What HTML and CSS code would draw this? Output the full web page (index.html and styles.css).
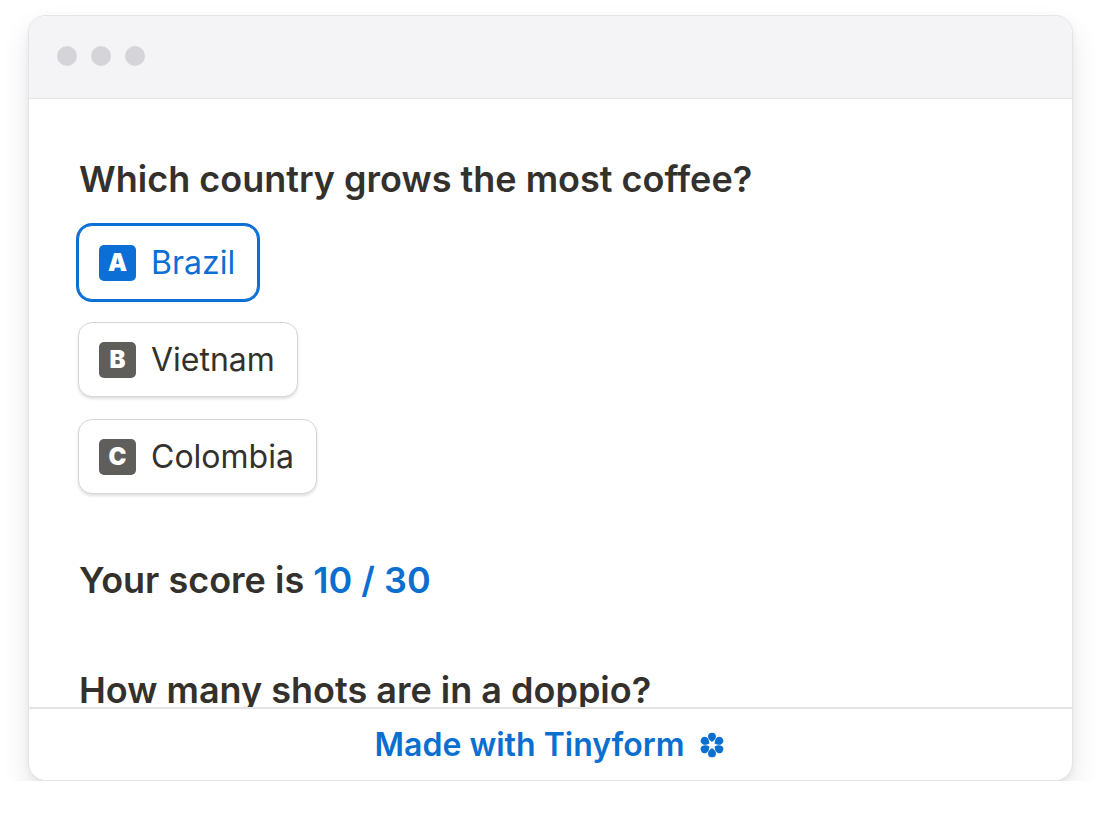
FILE: index.html
```html
<!DOCTYPE html>
<html>
<head>
<meta charset="utf-8">
<link rel="stylesheet" href="styles.css">
</head>
<body>
<div class="window">
  <div class="titlebar">
    <span class="dot"></span><span class="dot"></span><span class="dot"></span>
  </div>
  <div class="content">
    <h2 class="question">Which country grows the most coffee?</h2>
    <div class="options">
      <div class="option selected"><span class="key">A</span><span class="label">Brazil</span></div>
      <div class="option"><span class="key">B</span><span class="label">Vietnam</span></div>
      <div class="option"><span class="key">C</span><span class="label">Colombia</span></div>
    </div>
    <p class="score">Your score is <span class="accent">10 / 30</span></p>
    <h2 class="question next">How many shots are in a doppio?</h2>
  </div>
  <div class="footer">
    <span class="made">Made with Tinyform</span>
    <svg class="flower" viewBox="-12 -12 24 24" aria-hidden="true">
      <g fill="currentColor">
        <path id="p" d="M0,-2.6 C-1.9,-3.9 -3.4,-5.4 -3.4,-7.2 A3.4,3.4 0 1 1 3.4,-7.2 C3.4,-5.4 1.9,-3.9 0,-2.6Z"/>
        <use href="#p" transform="rotate(60)"/>
        <use href="#p" transform="rotate(120)"/>
        <use href="#p" transform="rotate(180)"/>
        <use href="#p" transform="rotate(240)"/>
        <use href="#p" transform="rotate(300)"/>
      </g>
    </svg>
  </div>
</div>
</body>
</html>
```

FILE: styles.css
```css
html, body {
  margin: 0;
  padding: 0;
  background: #ffffff;
}
body {
  font-family: Inter, "Noto Sans", sans-serif;
  color: #34312d;
  padding: 15px 27px 0 28px;
}
.window {
  width: 1045px;
  height: 766px;
  box-sizing: border-box;
  border: 1px solid #e4e4e6;
  border-radius: 18px;
  overflow: hidden;
  display: flex;
  flex-direction: column;
  background: #fff;
  box-shadow: 0 14px 28px rgba(0, 0, 0, 0.1), 0 2px 6px rgba(0, 0, 0, 0.05);
}
.titlebar {
  height: 83px;
  box-sizing: border-box;
  flex: none;
  background: #f4f4f6;
  border-bottom: 1px solid #e4e4e6;
  display: flex;
  align-items: center;
  gap: 14px;
  padding: 0 0 2px 28px;
}
.dot {
  width: 20px;
  height: 20px;
  border-radius: 50%;
  background: #d5d5d9;
}
.content {
  flex: 1;
  overflow: hidden;
  padding: 0 50px;
}
.question {
  margin: 58px 0 0;
  font-size: 36px;
  font-weight: 600;
  line-height: 44px;
  letter-spacing: 0;
}
.options {
  margin: 24px 0 0 -1px;
  display: flex;
  flex-direction: column;
  align-items: flex-start;
  gap: 22px;
}
.option {
  height: 75px;
  box-sizing: border-box;
  border: 1px solid #d6d6d6;
  border-radius: 14px;
  padding: 0 22px 0 20px;
  display: flex;
  align-items: center;
  gap: 15px;
  box-shadow: 0 2px 3px rgba(0, 0, 0, 0.12);
  background: #fff;
}
.option.selected {
  border-color: #0b6fd6;
  box-shadow: 0 0 0 2px #0b6fd6;
  color: #0b6fd6;
}
.key {
  width: 37px;
  height: 36px;
  border-radius: 5px;
  background: #5f5e5b;
  color: #fff;
  font-weight: 900;
  font-size: 24px;
  display: flex;
  align-items: center;
  justify-content: center;
}
.option.selected .key {
  background: #0b6fd6;
}
.label {
  font-size: 32px;
  line-height: 1;
}
.score {
  margin: 64px 0 0;
  font-size: 36px;
  font-weight: 600;
  line-height: 44px;
}
.accent {
  color: #0b6fd0;
}
.question.next {
  margin-top: 66px;
}
.footer {
  height: 73px;
  flex: none;
  box-sizing: border-box;
  border-top: 2px solid #e4e4e6;
  display: flex;
  align-items: center;
  justify-content: center;
  gap: 14px;
  color: #0b6fd0;
}
.made {
  font-size: 32px;
  font-weight: 600;
}
.flower {
  width: 28px;
  height: 28px;
}
```
